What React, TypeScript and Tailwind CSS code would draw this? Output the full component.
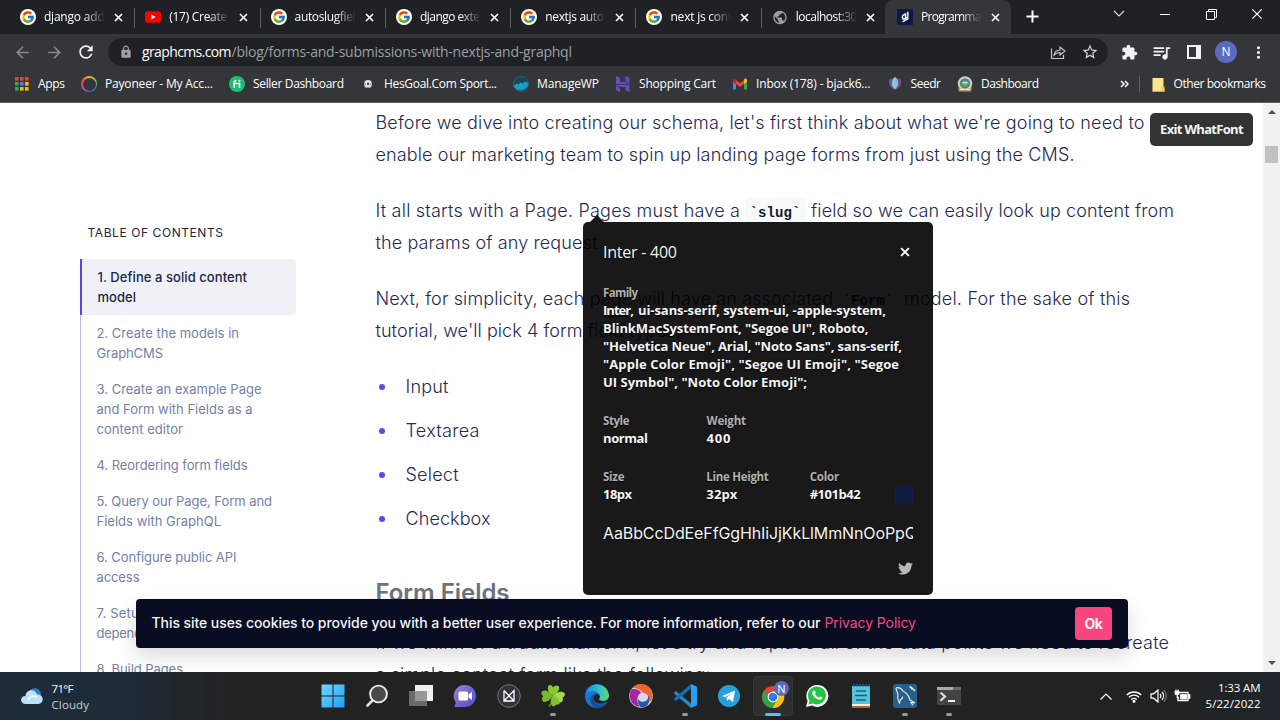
import { useLayoutEffect, useRef, useState } from "react";
import type { ReactNode } from "react";
import { FcGoogle } from "react-icons/fc";
import { FaTwitter } from "react-icons/fa";
import {
  MdArrowBack,
  MdArrowForward,
  MdExtension,
  MdLock,
  MdMoreVert,
  MdPublic,
  MdQueueMusic,
  MdRefresh,
  MdStarOutline,
} from "react-icons/md";

/** Single-line text whose letter spacing is tuned so that it fills `w` pixels. */
function Fit({ w, className = "", children }: { w: number; className?: string; children: string }) {
  const ref = useRef<HTMLSpanElement>(null);
  const [spacing, setSpacing] = useState(0);
  useLayoutEffect(() => {
    const natural = ref.current!.getBoundingClientRect().width;
    setSpacing((w - natural) / Math.max(1, children.length - 1));
  }, []);
  return (
    <span className={`inline-block whitespace-nowrap ${className}`} style={{ width: w }}>
      <span ref={ref} style={{ letterSpacing: spacing }}>
        {children}
      </span>
    </span>
  );
}

function GoogleBadge() {
  return (
    <span className="flex size-4 items-center justify-center rounded-full bg-white">
      <FcGoogle size={14} />
    </span>
  );
}

function Youtube() {
  return (
    <svg width="16" height="16" viewBox="0 0 16 16">
      <rect y="2.3" width="16" height="11.4" rx="2.6" fill="#f00" />
      <path d="M6.4 5.6v4.8L10.6 8z" fill="#fff" />
    </svg>
  );
}

function GraphCms() {
  return (
    <svg width="16" height="16" viewBox="0 0 16 16">
      <rect width="16" height="16" fill="#0d1a45" />
      <path
        d="M10.8 2.800v7L5.500 12.800M10.500 8.300 7.200 10a1.200 1.200 0 0 1-1.700-1.100V7.300c0-.5.300-1 .8-1.200l2.200-1.200v3.600"
        fill="none"
        stroke="#fff"
        strokeWidth="1.4"
      />
    </svg>
  );
}

function CloseX({ size = 9, stroke = 1.7 }: { size?: number; stroke?: number }) {
  return (
    <svg width={size} height={size} viewBox="0 0 9 9">
      <path d="M1 1l7 7M8 1L1 8" stroke="#fff" strokeWidth={stroke} />
    </svg>
  );
}

const tabs: { icon: ReactNode; title: string; w: number }[] = [
  { icon: <GoogleBadge />, title: "django add s", w: 69 },
  { icon: <Youtube />, title: "(17) Create A", w: 68 },
  { icon: <GoogleBadge />, title: "autoslugfield", w: 68 },
  { icon: <GoogleBadge />, title: "django exten", w: 67 },
  { icon: <GoogleBadge />, title: "nextjs auto s", w: 67 },
  { icon: <GoogleBadge />, title: "next js conve", w: 70 },
  { icon: <MdPublic size={17} className="text-[#9aa0a6]" />, title: "localhost:300", w: 68 },
];

function TabStrip() {
  return (
    <div className="flex h-[34px] bg-[#202124] pl-2">
      {tabs.map((t, i) => (
        <div key={i} className="relative flex w-[125.3px] items-center pl-3">
          <span className="flex w-4 shrink-0 justify-center">{t.icon}</span>
          <TabTitle title={t.title} w={t.w} />
          <CloseX />
          {i < 6 && <span className="absolute right-[-2px] top-2 h-5 w-px bg-[#5b5d61]" />}
        </div>
      ))}
      <div className="flex w-[126px] items-center rounded-t-lg bg-[#35363a] pl-3">
        <GraphCms />
        <TabTitle title="Programmati" w={66} />
        <CloseX />
      </div>
      <svg width="13" height="13" viewBox="0 0 13 13" className="ml-[15px] mt-[10px]">
        <path d="M6.5 .5v12M.5 6.5h12" stroke="#fff" strokeWidth="2" />
      </svg>
      <div className="ml-auto flex h-7 items-center">
        <span className="flex w-[46px] justify-center">
          <svg width="12" height="8" viewBox="0 0 12 8">
            <path d="M1 1l5 5 5-5" fill="none" stroke="#ddd" strokeWidth="1.1" />
          </svg>
        </span>
        <span className="flex w-[46px] justify-center">
          <span className="h-px w-2.5 bg-white" />
        </span>
        <span className="flex w-[46px] justify-center">
          <svg width="11" height="11" viewBox="0 0 11 11" fill="none" stroke="#fff">
            <path d="M.5 2.5h8v8h-8zM2.5 2.5v-2h8v8h-2" />
          </svg>
        </span>
        <span className="flex w-[46px] justify-center">
          <CloseX size={12} stroke={0.9} />
        </span>
      </div>
    </div>
  );
}

function TabTitle({ title, w }: { title: string; w: number }) {
  return (
    <span className="ml-2 mr-[9px] w-[61px] overflow-hidden text-[12px] leading-5 text-white [mask-image:linear-gradient(to_right,black_65%,transparent)]">
      <Fit w={w}>{title}</Fit>
    </span>
  );
}

function Toolbar() {
  return (
    <div className="flex h-[34px] items-center bg-[#35363a] pt-[2px] text-[#f1f3f4]">
      <span className="ml-[13px] text-[#87888b]">
        <MdArrowBack size={19} />
      </span>
      <span className="ml-[13px] text-[#87888b]">
        <MdArrowForward size={19} />
      </span>
      <span className="ml-[12px]">
        <MdRefresh size={20} />
      </span>
      <div className="ml-3 flex h-7 w-[1000px] shrink-0 items-center rounded-full bg-[#202124] pl-[11px]">
        <MdLock size={14} className="text-[#9aa0a6]" />
        <span className="ml-[9px] flex text-[14px] leading-5">
          <Fit w={89.5} className="text-white">graphcms.com</Fit>
          <Fit w={340.5} className="text-[#9aa0a6]">/blog/forms-and-submissions-with-nextjs-and-graphql</Fit>
        </span>
        <svg width="16" height="16" viewBox="0 0 16 16" className="ml-auto mr-[15px]" fill="none" stroke="#c4c7cb" strokeWidth="1.2">
          <path d="M1.5 4.5v10h12v-3.5M4 11c.4-3.2 2.5-4.8 6-5V3.2L15 7l-5 4V8.7C7.200 8.700 5.400 9.300 4 11z" />
        </svg>
        <MdStarOutline size={18} className="mr-[9px] text-[#d5d7da]" />
      </div>
      <MdExtension size={17} className="ml-[13px] shrink-0" />
      <MdQueueMusic size={21} className="ml-[13px] shrink-0" />
      <svg width="14" height="14" viewBox="0 0 14 14" className="ml-[15px] shrink-0">
        <path d="M1 1h12v12H1z" fill="none" stroke="#f1f3f4" strokeWidth="2" />
        <path d="M9 1h4v12H9z" fill="#f1f3f4" />
      </svg>
      <span className="ml-[14px] flex size-[22px] shrink-0 items-center justify-center rounded-full bg-[#5c6bc0] text-[12px] text-white">N</span>
      <MdMoreVert size={19} className="ml-[12px] shrink-0" />
    </div>
  );
}

function AppsGrid() {
  const colors = ["#ea4335", "#ea4335", "#ea4335", "#34a853", "#4285f4", "#fbbc04", "#34a853", "#fbbc04", "#fbbc04"];
  return (
    <svg width="14" height="14" viewBox="0 0 14 14">
      {colors.map((c, i) => (
        <rect key={i} x={(i % 3) * 5} y={Math.floor(i / 3) * 5} width="3.6" height="3.6" fill={c} />
      ))}
    </svg>
  );
}

function Payoneer() {
  return (
    <span className="flex size-4 items-center justify-center rounded-full bg-[conic-gradient(#f5b13d,#7fc24a_20%,#2b9fe0_35%,#6a5ae0_50%,#d147b8_65%,#f0503c_85%,#f5b13d)]">
      <span className="size-[13px] rounded-full bg-[#35363a]" />
    </span>
  );
}

function Fiverr() {
  return (
    <svg width="16" height="16" viewBox="0 0 16 16">
      <circle cx="8" cy="8" r="8" fill="#1dbf73" />
      <path d="M5.300 12V6.500c0-1.500.8-2 2.200-2M4 7.500h6.500V12" fill="none" stroke="#fff" strokeWidth="1.6" />
      <circle cx="10.500" cy="4.800" r="1" fill="#fff" />
    </svg>
  );
}

function Football() {
  return (
    <svg width="16" height="16" viewBox="0 0 16 16">
      <circle cx="8" cy="8" r="4" fill="#e0e0e0" />
      <path d="M6.800 7.200 8 6.400l1.300.8-.5 1.600H7.200z" fill="#333" />
      <path d="M4.300 7l1 .8-.4 1.700M11.700 7l-1 .8.400 1.700M7 11.700l1-.9 1 .9" fill="none" stroke="#555" strokeWidth=".7" />
    </svg>
  );
}

function ManageWp() {
  return (
    <svg width="16" height="16" viewBox="0 0 16 16">
      <circle cx="8" cy="8" r="7.500" fill="#164657" stroke="#1c8fad" strokeWidth=".5" />
      <path d="M.5 9.800 4 7.500l1.300 1L8 6.300l1.500 1.400L12.500 5.200l1 1.500 1.800-.5A7.800 7.800 0 0 1 .5 9.800z" fill="#1b9fc0" />
    </svg>
  );
}

function Hostinger() {
  return (
    <svg width="16" height="16" viewBox="0 0 16 16" fill="#6b46d0">
      <path d="M1 0l4 2v4h5l4 2.200H1zM10.500 0l4 2v5.500l-4-2zM1 9h13.500v7l-4-2v-3H5.500L1 9zM1 9.500 5 12v4l-4-2z" />
    </svg>
  );
}

function Gmail() {
  return (
    <svg width="16" height="16" viewBox="0 0 16 16">
      <path d="M1 4v9.500h3V7z" fill="#4285f4" />
      <path d="M12 7v6.500h3V4z" fill="#34a853" />
      <path d="M12 4v4l3-2.200V4c0-1.700-1.700-2-2.500-1.200z" fill="#fbbc04" />
      <path d="M4 4v4l4 3 4-3V4L8 7z" fill="#ea4335" />
      <path d="M1 4v1.800L4 8V4C3 2.200 1 2.500 1 4z" fill="#c5221f" />
    </svg>
  );
}

function Seedr() {
  return (
    <svg width="16" height="16" viewBox="0 0 16 16">
      <path d="M8 14C3 12 1 7 2.200 3.500L8 1.500l5.800 2C15 8 13 12 8 14z" fill="#7b4c91" />
      <path d="M8 13C4 10.500 3.500 5 8 .8c4.500 4.200 4 9.700 0 12.200z" fill="#7dc6d6" />
      <path d="M8 12.500C6.500 10 6.500 5 8 1.500" fill="none" stroke="#a9cfe0" />
    </svg>
  );
}

function Crest() {
  return (
    <svg width="16" height="16" viewBox="0 0 16 16">
      <circle cx="8" cy="7.600" r="7.300" fill="#cdd3b8" />
      <circle cx="8" cy="7.400" r="5.200" fill="#4b8790" />
      <path d="M4 8c2-3 6-3 8 0l-4 2.500z" fill="#7da650" />
      <path d="M5.500 6.500h5" stroke="#e8ead0" strokeWidth="1.500" />
      <path d="M1 11c3 3 11 3 14 0l-1 4.500H2z" fill="#b59d5e" />
      <path d="M3 13.500h10" stroke="#efe8cc" strokeWidth="1" />
    </svg>
  );
}

const bookmarks: { icon: ReactNode; label: string; w: number }[] = [
  { icon: <Payoneer />, label: "Payoneer - My Acc...", w: 108 },
  { icon: <Fiverr />, label: "Seller Dashboard", w: 91 },
  { icon: <Football />, label: "HesGoal.Com Sport...", w: 113 },
  { icon: <ManageWp />, label: "ManageWP", w: 62 },
  { icon: <Hostinger />, label: "Shopping Cart", w: 77 },
  { icon: <Gmail />, label: "Inbox (178) - bjack6...", w: 114.500 },
  { icon: <Seedr />, label: "Seedr", w: 30.500 },
  { icon: <Crest />, label: "Dashboard", w: 58 },
];

function BookmarksBar() {
  return (
    <div className="flex h-[34px] items-center bg-[#35363a] pb-[2px] pl-[15px] pr-[14px] text-[12px] text-white">
      <AppsGrid />
      <Fit w={27} className="ml-[9px] mr-4">Apps</Fit>
      <div className="flex gap-4">
        {bookmarks.map((b) => (
          <div key={b.label} className="flex items-center gap-2">
            {b.icon}
            <Fit w={b.w}>{b.label}</Fit>
          </div>
        ))}
      </div>
      <svg width="9" height="8" viewBox="0 0 9 8" className="ml-auto" fill="none" stroke="#fff" strokeWidth="1.500">
        <path d="M1 1l3 3-3 3M5 1l3 3-3 3" />
      </svg>
      <span className="ml-[10px] h-4 w-px bg-[#5f6064]" />
      <svg width="13" height="15" viewBox="0 0 13 15" className="ml-[12px]">
        <path d="M.5 1h11v9.500L12.500 12v2.500H.5z" fill="#ffe48a" />
        <path d="M.5 14.500V14h9.500V10l2.500-.5v5z" fill="#f2c94c" />
      </svg>
      <Fit w={92.500} className="ml-[9px]">Other bookmarks</Fit>
    </div>
  );
}

const toc: { text: string; w: number }[][] = [
  [{ text: "2. Create the models in", w: 142.500 }, { text: "GraphCMS", w: 66.500 }],
  [
    { text: "3. Create an example Page", w: 165 },
    { text: "and Form with Fields as a", w: 156 },
    { text: "content editor", w: 86.500 },
  ],
  [{ text: "4. Reordering form fields", w: 151 }],
  [{ text: "5. Query our Page, Form and", w: 175.500 }, { text: "Fields with GraphQL", w: 124.500 }],
  [{ text: "6. Configure public API", w: 140 }, { text: "access", w: 43 }],
  [{ text: "7. Setup project and", w: 126 }, { text: "dependencies", w: 84 }],
  [{ text: "8. Build Pages", w: 86.500 }],
];

function TableOfContents() {
  return (
    <nav className="ml-20 w-[216px] shrink-0 pt-[120px] text-[13px] leading-5">
      <h2 className="pl-[7.500px] text-[12px] font-normal leading-5 text-[#22263a]">
        <Fit w={135.500}>TABLE OF CONTENTS</Fit>
      </h2>
      <ul className="mt-4">
        <li className="flex flex-col rounded-r border-l-2 border-[#5b42e6] bg-[#f0f1f7] py-2 pl-[15.500px] font-medium text-[#1c2549]">
          <Fit w={149.500}>1. Define a solid content</Fit>
          <Fit w={38.500}>model</Fit>
        </li>
        {toc.map((lines, i) => (
          <li key={i} className="flex flex-col border-l border-[#b4bedd] py-2 pl-[15.500px] text-[#747fa8]">
            {lines.map((l) => (
              <Fit key={l.text} w={l.w}>{l.text}</Fit>
            ))}
          </li>
        ))}
      </ul>
    </nav>
  );
}

function Code({ children }: { children: string }) {
  return (
    <code className="inline-flex h-[28px] w-[61px] items-center justify-center rounded bg-[#f8f9fb] pr-px pt-[3px] font-['Liberation_Mono',monospace] text-[14px] font-bold leading-none text-[#151a2c]">
      <Fit w={51}>{children}</Fit>
    </code>
  );
}

function Article() {
  return (
    <article className="ml-[79.500px] w-[830px] shrink-0 pt-1 text-[18px] font-light leading-8 text-[#1f2a55]">
      <p className="flex flex-col">
        <Fit w={769}>Before we dive into creating our schema, let's first think about what we're going to need to</Fit>
        <Fit w={699}>enable our marketing team to spin up landing page forms from just using the CMS.</Fit>
      </p>
      <p className="mt-6 flex flex-col">
        <span className="flex h-8 items-center gap-[5px]">
          <Fit w={364.500}>It all starts with a Page. Pages must have a</Fit>
          <Code>`slug`</Code>
          <Fit w={363}>field so we can easily look up content from</Fit>
        </span>
        <Fit w={227}>the params of any request.</Fit>
      </p>
      <p className="mt-6 flex flex-col">
        <span className="flex h-8 items-center gap-[5px]">
          <Fit w={457.500}>Next, for simplicity, each page will have an associated</Fit>
          <Code>`Form`</Code>
          <Fit w={226}>model. For the sake of this</Fit>
        </span>
        <Fit w={305.500}>tutorial, we'll pick 4 form field types;</Fit>
      </p>
      <ul className="mt-6 flex flex-col gap-3">
        {[
          ["Input", 43],
          ["Textarea", 74],
          ["Select", 53],
          ["Checkbox", 85],
        ].map(([label, w]) => (
          <li key={label} className="flex h-8 items-center pl-[3.500px]">
            <span className="mr-[20.500px] size-[6px] rounded-full bg-[#6246ea]" />
            <Fit w={w as number}>{label as string}</Fit>
          </li>
        ))}
      </ul>
      <h3 className="mt-[42px] h-8 text-[24px] font-semibold text-[#6b7280]">
        <Fit w={134}>Form Fields</Fit>
      </h3>
      <p className="mt-[18px] flex flex-col">
        <Fit w={793.500}>If we think of a traditional form, let's try and replace all of the data points we need to recreate</Fit>
        <Fit w={335}>a simple contact form like the following:</Fit>
      </p>
    </article>
  );
}

function Field({ label, lw, value, vw }: { label: string; lw: number; value: string; vw: number }) {
  return (
    <div className="flex w-[103.500px] flex-col">
      <Fit w={lw} className="text-[11.500px] font-bold leading-[17px] text-[#b0b0b0]">{label}</Fit>
      <Fit w={vw} className="text-[13px] font-bold leading-[18px]">{value}</Fit>
    </div>
  );
}

function FontPanel() {
  return (
    <div className="absolute left-[583px] top-[119px] h-[373px] w-[350px] rounded-[5px] bg-black/90 px-5 text-[#f5f5f5] [text-shadow:0_1px_1px_#000]">
      <svg width="14" height="7" viewBox="0 0 14 7" className="absolute -top-[7px] left-[7px]">
        <path d="M0 7l7-7 7 7z" fill="#000" fillOpacity=".9" />
      </svg>
      <div className="flex items-center justify-between pt-[20px]">
        <Fit w={74} className="text-[16px] leading-5">Inter - 400</Fit>
        <span className="mr-[3px] flex">
          <CloseX size={10} stroke={1.700} />
        </span>
      </div>
      <div className="mt-[22px] flex flex-col text-[13px] font-bold leading-[18px]">
        <Fit w={35} className="text-[11.500px] leading-[17px] text-[#b0b0b0]">Family</Fit>
        <span className="flex h-[18px]">
          <Fit w={31} className="h-[16px] border-b border-black">Inter,</Fit>
          <Fit w={248} className="ml-1">ui-sans-serif, system-ui, -apple-system,</Fit>
        </span>
        <Fit w={265.500}>BlinkMacSystemFont, "Segoe UI", Roboto,</Fit>
        <Fit w={299}>"Helvetica Neue", Arial, "Noto Sans", sans-serif,</Fit>
        <Fit w={296}>"Apple Color Emoji", "Segoe UI Emoji", "Segoe</Fit>
        <Fit w={204}>UI Symbol", "Noto Color Emoji";</Fit>
      </div>
      <div className="mt-[21px] flex">
        <Field label="Style" lw={26.500} value="normal" vw={45} />
        <Field label="Weight" lw={39.500} value="400" vw={24} />
      </div>
      <div className="mt-[21px] flex">
        <Field label="Size" lw={21.500} value="18px" vw={29} />
        <Field label="Line Height" lw={62.500} value="32px" vw={31} />
        <Field label="Color" lw={29.500} value="#101b42" vw={51} />
        <span className="-ml-[18px] mt-[18px] size-[18px] shrink-0 bg-[#0f1a40]" />
      </div>
      <div className="mt-[17px] overflow-hidden font-['Inter',sans-serif] text-[16px] leading-6">
        <Fit w={314}>AaBbCcDdEeFfGgHhIiJjKkLlMmNnOoPpQ</Fit>
      </div>
      <div className="mt-[16px] flex justify-end">
        <FaTwitter size={15} className="text-[#b8b8b8]" />
      </div>
    </div>
  );
}

function CookieBar() {
  return (
    <div className="absolute left-[136px] top-[496px] flex h-[49px] w-[992px] items-center rounded bg-[#080d21] pl-[15.500px] pr-4 text-[14px] text-[#f4f4f6] shadow-[0_8px_20px_rgba(0,0,0,0.15)]">
      <Fit w={669} className="pb-[2px] font-medium">This site uses cookies to provide you with a better user experience. For more information, refer to our</Fit>
      <Fit w={91.500} className="ml-1 pb-[2px] text-[#f9467f]">Privacy Policy</Fit>
      <button className="ml-auto h-[33px] w-[37px] rounded bg-[#f9467f] pb-px font-bold">
        <Fit w={18.500}>Ok</Fit>
      </button>
    </div>
  );
}

function Scrollbar() {
  return (
    <div className="ml-auto flex w-[17px] shrink-0 flex-col items-center bg-[#f1f1f1]">
      <svg width="8" height="4" viewBox="0 0 8 4" className="mt-[7px]">
        <path d="M0 4l4-4 4 4z" fill="#505050" />
      </svg>
      <span className="mt-[32px] h-[17px] w-[13px] bg-[#c1c1c1]" />
      <svg width="8" height="4" viewBox="0 0 8 4" className="mb-[7px] mt-auto">
        <path d="M0 0l4 4 4-4z" fill="#505050" />
      </svg>
    </div>
  );
}

const taskIcons: { el: ReactNode; dot?: boolean; active?: boolean }[] = [
  {
    el: (
      <svg width="24" height="24" viewBox="0 0 24 24">
        <defs>
          <linearGradient id="win" x1="0" y1="0" x2="1" y2="1" gradientUnits="objectBoundingBox">
            <stop offset="0" stopColor="#6fd8ff" />
            <stop offset="1" stopColor="#1ba0f8" />
          </linearGradient>
        </defs>
        <path d="M.5.5h11v11H.5zM12.500.5h11v11h-11zM.5 12.500h11v11H.5zM12.500 12.500h11v11h-11z" fill="url(#win)" />
      </svg>
    ),
  },
  {
    el: (
      <svg width="24" height="24" viewBox="0 0 24 24">
        <path d="M7.500 16.500 2.500 21.500" stroke="#ddd" strokeWidth="2.600" strokeLinecap="round" />
        <circle cx="13.500" cy="10" r="8.400" fill="#4a4a4a" stroke="#ececec" strokeWidth="1.900" />
      </svg>
    ),
  },
  {
    el: (
      <svg width="24" height="24" viewBox="0 0 24 24">
        <path d="M6 1h18v16H6z" fill="#f0f0f0" />
        <path d="M0 7h18v15H0z" fill="#6a6a6a" />
        <path d="M6 7h12v10H6z" fill="#989898" />
      </svg>
    ),
  },
  {
    el: (
      <svg width="24" height="24" viewBox="0 0 24 24">
        <defs>
          <linearGradient id="chat" x1="0" y1="0" x2="1" y2="1">
            <stop offset="0" stopColor="#9a7fd0" />
            <stop offset="1" stopColor="#4b4fcb" />
          </linearGradient>
        </defs>
        <path d="M12 1a11 11 0 1 1 0 22H1.500l1.300-4.500A11 11 0 0 1 12 1z" fill="url(#chat)" />
        <rect x="5.500" y="7.500" width="9.500" height="9" rx="1.500" fill="#fff" />
        <path d="M15.500 10.500l3.500-2.500v8l-3.500-2.500z" fill="#fff" />
      </svg>
    ),
  },
  {
    el: (
      <svg width="24" height="24" viewBox="0 0 24 24" fill="none">
        <circle cx="12" cy="12" r="11.300" fill="#33323c" stroke="#77767e" />
        <path d="M7 6.500v10.500h10V6.500L7 17M7 6.500 17 17" stroke="#fff" strokeWidth="1.300" />
      </svg>
    ),
  },
  {
    dot: true,
    el: (
      <svg width="24" height="24" viewBox="0 0 24 24">
        <path d="M12 12c1 5-2 8-4 10.500" stroke="#5c9b2a" strokeWidth="1.500" fill="none" />
        <path d="M12 11C7 10 6 4 7.500 1.500c2-1.500 4 0 4.500 2 1.500-2 4.500-3 6-1 1 3-1.500 7-6 8.500z" fill="#8bc934" />
        <path d="M12 11.500C8 7 3 5 1 7.500c-1.500 2 0 4 1.500 4.500-2 1.500-2 4.500 0 6 3.500.5 7-2 9.500-6.500z" fill="#79b92c" />
        <path d="M12 11.500c4-4 9-5 11.500-2.500 1 2 0 3.500-2 4.500 1 1.500.5 4-2 5-3-.5-6-3-7.500-7z" fill="#a3d84a" />
        <path d="M12 11.500c-3 4-3 8-.5 10.500 1.500.5 3 0 3.500-1.500 1.500.5 3.500 0 4-2-1-3-3-5.500-7-7z" fill="#84c232" />
      </svg>
    ),
  },
  {
    el: (
      <svg width="24" height="24" viewBox="0 0 24 24">
        <defs>
          <linearGradient id="edge" x1="0" y1="0" x2="1" y2="0">
            <stop offset="0" stopColor="#1789dc" />
            <stop offset=".6" stopColor="#32c1d0" />
            <stop offset="1" stopColor="#62dc55" />
          </linearGradient>
        </defs>
        <circle cx="12" cy="12" r="12" fill="#1676cf" />
        <path d="M.3 10A12 12 0 0 1 24 11.500c0 3.500-2.500 5.500-6 5.500-2.500 0-4-.8-4-1.700 0-.8 1-1 1-3 0-3-3.500-5-7-5C4 7.300 1 9 .3 10z" fill="url(#edge)" />
        <path d="M10 10.500c-4 5 1 12.500 12.500 7.500l1.300.5L24 13c-1 3-3 4-6 4-2.500 0-4-.8-4-1.700 0-.8 1-1 .8-2.800-.3-2-3-3.500-4.800-2z" fill="#222222" />
        <path d="M10 10.500c-3 4-.5 9.500 5 10 3 .2 5-.5 7-2.200-2 3.500-6 5.500-10 5.500C6 23 4 17 6 13c1-1.800 2.500-2.500 4-2.500z" fill="#134e9c" />
      </svg>
    ),
  },
  {
    el: (
      <svg width="24" height="24" viewBox="0 0 24 24">
        <circle cx="12" cy="12" r="11.800" fill="#d8d8e4" />
        <path d="M3.500 4A11.500 11.500 0 0 1 23.500 11c.3 3-1 6-3 7.500C21 13 18 9 13.500 8.500 11 5 7 4 3.500 4z" fill="#f0642c" />
        <path d="M2.800 5c5-.5 9 1.500 9.200 4-4 2-5 7.500-1.500 14A11.500 11.500 0 0 1 2.800 5z" fill="#a5269e" />
        <path d="M9.200 15c2 3.500 6 3.500 8.300 1.500 1.500-1.500 2-3 1.500-5 3 3 .5 9.500-1.500 10.500-2 1.200-4 1.500-6 1.300C9.500 21 8.500 18 9.200 15z" fill="#2458a6" />
      </svg>
    ),
  },
  {
    dot: true,
    el: (
      <svg width="24" height="24" viewBox="0 0 24 24">
        <path d="M1 8.500 3 7l15.500 13L18 24 1 9.500z" fill="#2489ca" />
        <path d="M1 15.500 3 17 18.500 4 18 0 1 14.500z" fill="#1070b3" />
        <path d="M18 0l6 2.800v18.400L18 24z" fill="#2ba0f0" />
      </svg>
    ),
  },
  {
    el: (
      <svg width="24" height="24" viewBox="0 0 24 24">
        <circle cx="12" cy="12" r="11" fill="#289fd9" />
        <path d="M5 12 18 6.500 16 18l-4-3-2 2-.5-3.500L15 9l-7 4.300z" fill="#fff" />
      </svg>
    ),
  },
  {
    active: true,
    el: (
      <svg width="30" height="28" viewBox="0 0 30 28" className="-mt-[3px] ml-[2px] shrink-0">
        <circle cx="14" cy="16" r="11" fill="#e8412f" />
        <path d="M4.500 10.500A11 11 0 0 0 13.500 27l5-8.500L14 16z" fill="#34a248" />
        <path d="M14 11h10a11 11 0 0 1-10.500 16l5-8.500z" fill="#fbc116" />
        <circle cx="14" cy="16" r="5.400" fill="#fff" />
        <circle cx="14" cy="16" r="4.300" fill="#2f7bee" />
        <circle cx="22.500" cy="7.500" r="7.500" fill="#5c6bc0" />
        <text x="22.500" y="11.500" textAnchor="middle" fontSize="11" fill="#fff">N</text>
      </svg>
    ),
  },
  {
    el: (
      <svg width="24" height="24" viewBox="0 0 24 24">
        <path d="M1 23l1.600-6A11 11 0 1 1 7 21.500z" fill="#fff" />
        <path d="M3.500 20.500l1-4A9 9 0 1 1 8 19.500z" fill="#24c344" />
        <path d="M8 7c1-1 2-.8 2.500.8.5 1.500-.7 1.700-.3 2.500 1 1.700 2 2.500 3.500 3.200.8.200 1-1.300 2-1 2 .9 2 1.200 1.200 2.500-2 2-6 0-8-2.500C7 10.500 6.500 8.500 8 7z" fill="#fff" />
      </svg>
    ),
  },
  {
    el: (
      <svg width="24" height="24" viewBox="0 0 24 24">
        <path d="M3 2h18v19H3z" fill="#55c4dc" />
        <path d="M3 20h18v2H3z" fill="#f4f0e8" />
        <path d="M3 22h18v2H3z" fill="#b36528" />
        <path d="M5 0v3M8 0v3M11 0v3M14 0v3M17 0v3M20 0v3" stroke="#16779a" strokeWidth="1.200" />
        <path d="M7 7h10M6 11.500h12M7 16h10" stroke="#17627e" strokeWidth="1.500" />
      </svg>
    ),
  },
  {
    dot: true,
    el: (
      <svg width="24" height="24" viewBox="0 0 24 24" fill="none">
        <rect width="24" height="24" rx="3" fill="#285f8b" />
        <path d="M3 4c3-1 5 0 7 3 4 2 6 5 7 9l5 3-4-.5 2 3M3 4c0 3 2 4 2 7-1 3 0 5 1.500 8l1-3.500c2 0 2-1 2-3" stroke="#e8f0f5" strokeWidth="1.100" />
        <path d="M16.500 2.500l2 1 3.500 3.500M18.500 3.500v2" stroke="#e8f0f5" strokeWidth="1.400" />
      </svg>
    ),
  },
  {
    dot: true,
    el: (
      <svg width="24" height="24" viewBox="0 0 24 24" fill="none">
        <path d="M0 3h24v18H0z" fill="#444" />
        <path d="M0 3h16v3H0z" fill="#aaa" />
        <path d="M16 3h8v3h-8z" fill="#6c6c6c" />
        <path d="M3.500 8.500 8 12.500l-4.500 4.200" stroke="#ddd" strokeWidth="2.200" />
        <path d="M11 17h7" stroke="#eee" strokeWidth="2" />
      </svg>
    ),
  },
];

function Taskbar() {
  return (
    <footer className="flex h-12 bg-[linear-gradient(90deg,#1d2c39_0,#1e2c38_100px,#222222_240px,#222222_1180px,#1f262b_1280px)] text-[12px] text-white">
      <div className="flex w-[311px] shrink-0 items-center">
        <svg width="24" height="18" viewBox="0 0 24 18" className="ml-5">
          <path d="M8 9C8 2 15-1 19 3s2 11-3 11z" fill="#2f7fc8" />
          <path d="M6 17C-.5 17-.5 9 5.500 9 6 2 15 1 17 7.500c7-.5 8 9 1 9.500z" fill="#b9e2fb" />
          <path d="M8 13c2-4 6-5 9-3" stroke="#e9f7ff" strokeWidth="2" fill="none" />
        </svg>
        <div className="ml-[7.500px] flex flex-col pt-px text-[11.500px] leading-4">
          <Fit w={22}>71°F</Fit>
          <Fit w={37.500} className="text-[#c8cdd1]">Cloudy</Fit>
        </div>
      </div>
      <div className="flex">
        {taskIcons.map((t, i) => (
          <div key={i} className="flex w-11 items-center justify-center">
            <div
              className={
                t.active
                  ? "relative flex size-10 items-center justify-center rounded border border-[#383838] bg-[#2e2e2e]"
                  : "relative flex size-10 items-center justify-center"
              }
            >
              {t.el}
              {t.dot && <span className="absolute bottom-0 left-[17px] h-[3px] w-[6px] rounded-full bg-[#989898]" />}
              {t.active && <span className="absolute -bottom-px left-[11px] h-[3px] w-4 rounded-full bg-[#4cc2ff]" />}
            </div>
          </div>
        ))}
      </div>
      <div className="ml-auto flex items-center pr-[19.500px]">
        <svg width="12" height="7" viewBox="0 0 12 7" fill="none" stroke="#fff" strokeWidth="1.200">
          <path d="M.5 6.500 6 1l5.500 5.500" />
        </svg>
        <svg width="16" height="13" viewBox="0 0 16 13" fill="none" stroke="#fff" strokeWidth="1.300" className="ml-[14px]">
          <path d="M.8 5a10.200 10.200 0 0 1 14.400 0M3 7.300a7 7 0 0 1 10 0M5.300 9.500a3.800 3.800 0 0 1 5.400 0" />
          <circle cx="8" cy="11.300" r=".9" fill="#fff" />
        </svg>
        <svg width="17" height="14" viewBox="0 0 17 14" fill="none" stroke="#fff" strokeWidth="1.200" className="ml-[8px]">
          <path d="M1 4.800h2.500L8 1v12L3.500 9.200H1zM10 5c1 1.200 1 2.800 0 4M12 3c2 2.300 2 5.700 0 8" />
          <path d="M14 1.200c2.800 3.500 2.800 8 0 11.600" stroke="#777" />
        </svg>
        <svg width="17" height="14" viewBox="0 0 17 14" fill="none" stroke="#fff" className="ml-[7px]">
          <path d="M4.500 3.500h9.500v8H4v-3" strokeWidth="1.300" />
          <path d="M6.500 5.500h6v4.500h-6zM14.500 5.500h1.500v4h-1.500zM1 2h4v3.500H1zM2 .3v2M4 .3v2M3 5v4h2" fill="#fff" strokeWidth=".8" />
        </svg>
        <div className="ml-[14.500px] flex flex-col items-end text-[11.500px] leading-4">
          <Fit w={42.500}>1:33 AM</Fit>
          <Fit w={55}>5/22/2022</Fit>
        </div>
      </div>
    </footer>
  );
}

export default function App() {
  return (
    <div className="flex h-[720px] w-[1280px] flex-col overflow-hidden bg-white font-['Open_Sans','Noto_Sans',sans-serif]">
      <TabStrip />
      <Toolbar />
      <BookmarksBar />
      <div className="h-px bg-[#5f6064]" />
      <main className="relative flex h-[569px] overflow-hidden font-['Inter',sans-serif]">
        <TableOfContents />
        <Article />
        <Scrollbar />
        <CookieBar />
        <div className="contents font-['Open_Sans','Noto_Sans',sans-serif]">
          <FontPanel />
          <button className="absolute left-[1150px] top-[10px] h-[33px] w-[103px] rounded-[5px] bg-[#333] text-[13px] font-bold text-[#f5f5f5]">
            <Fit w={83.500}>Exit WhatFont</Fit>
          </button>
        </div>
      </main>
      <Taskbar />
    </div>
  );
}
